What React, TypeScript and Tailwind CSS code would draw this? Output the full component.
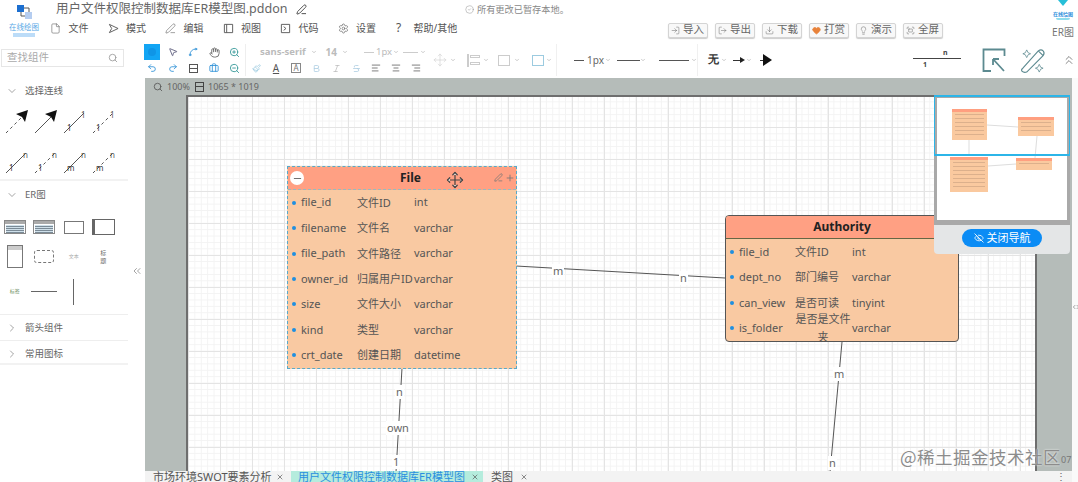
import React from "react";
import {
  AlignCenter,
  AlignLeft,
  AlignRight,
  Bold,
  Briefcase,
  ChevronDown,
  ChevronRight,
  ChevronsLeft,
  ChevronsLeftRight,
  ChevronsUp,
  CircleCheck,
  Download,
  EyeOff,
  File as FileIcon,
  Fullscreen,
  Hand,
  Heart,
  Italic,
  Lightbulb,
  LogIn,
  LogOut,
  Minus,
  Move,
  MousePointer2,
  Paintbrush,
  PenLine,
  Plus,
  Redo2,
  Search,
  Settings,
  Spline,
  Strikethrough,
  Undo2,
  X,
  ZoomIn,
  ZoomOut,
} from "lucide-react";

const MenuItem = ({ icon, label }: { icon: React.ReactNode; label: string }) => (
  <div className="w-[57.5px] shrink-0 flex items-center text-[10px] text-[#555] whitespace-nowrap">
    <span className="w-[18.5px] shrink-0 flex justify-start text-[#555]">{icon}</span>
    <span>{label}</span>
  </div>
);

const ActionButton = ({ icon, label }: { icon: React.ReactNode; label: string }) => (
  <button className="w-[40px] h-[15px] flex items-center justify-center gap-[3px] bg-[#f8f8f8] rounded-[2px] border border-[#d4d4d4] shadow-[0_1px_1px_#ccc] text-[10.5px] text-[#666]">
    {icon}
    {label}
  </button>
);

const Tool = ({ children, active }: { children: React.ReactNode; active?: boolean }) => (
  <div className="h-[16px] flex items-center justify-center">
    {active ? <span className="w-[16px] h-[16px] bg-[#12a5f4] flex items-center justify-center">{children}</span> : children}
  </div>
);

const Caret = ({ className = "" }: { className?: string }) => (
  <ChevronDown size={6} className={`shrink-0 text-[#999] ${className}`} />
);

const Connector = ({ dashed, start, end, arrow }: { dashed?: boolean; start?: string; end?: string; arrow?: boolean }) => (
  <svg width="26" height="26" viewBox="0 0 26 26" className="mx-auto">
    <line x1="2" y1="24" x2="22" y2="4" stroke="#555" strokeWidth="1" strokeDasharray={dashed ? "3 3" : undefined} />
    {arrow && <path d="M12 5 L24 1 L21 13 L18 8 Z" fill="#111" />}
    {start && <text x="5" y="22" fontSize="8" fill="#333">{start}</text>}
    {end && <text x="19" y="9" fontSize="8" fill="#555">{end}</text>}
  </svg>
);

const SectionTitle = ({ open, label }: { open?: boolean; label: string }) => (
  <div className="h-[26px] flex items-center pl-[6px] gap-[7px] text-[9.5px] text-[#666]">
    {open ? <ChevronDown size={12} strokeWidth={1.2} /> : <ChevronRight size={12} strokeWidth={1.2} />}
    <span>{label}</span>
  </div>
);

const MiniTable = () => (
  <div className="h-[14px] border border-[#888] bg-white">
    <div className="h-[3px] bg-[#aaa]" />
    <div className="h-[8px] m-[1px] bg-[repeating-linear-gradient(0deg,#7a8a96_0,#7a8a96_1px,#cfe0ea_1px,#cfe0ea_2px)]" />
  </div>
);

type Row = [string, string, string];

const ErTable = ({ title, rows, selected, className }: { title: string; rows: Row[]; selected?: boolean; className: string }) => (
  <div
    className={`absolute bg-[#f9c9a2] flex flex-col ${
      selected ? "border border-dashed border-[#58a9c9]" : "border border-[#555] rounded-[4px]"
    } ${className}`}
  >
    <div className={`h-[23px] shrink-0 bg-[#ffa083] relative flex items-center justify-center text-[12px] font-bold text-[#222] ${selected ? "pl-[17px] border-b border-dashed border-[#9bb]" : "rounded-t-[3px] border-b border-[#664]"}`}>
      {title}
      {selected && (
        <>
          <span className="absolute left-[2px] top-[4px] w-[14px] h-[14px] rounded-full bg-white flex items-center justify-center">
            <Minus size={11} strokeWidth={2} className="text-[#666]" />
          </span>
          <PenLine size={9} className="absolute right-[13px] top-[6px] text-[#777]" />
          <Plus size={10} className="absolute right-[1px] top-[6px] text-[#777]" />
        </>
      )}
    </div>
    {rows.map(([name, comment, type]) => (
      <div key={name} className="h-[25.5px] flex items-center pl-[4px] text-[11px] text-[#555]">
        <span className="w-[9px] shrink-0">
          <span className="block w-[4px] h-[4px] rounded-full bg-[#1f8fe0]" />
        </span>
        <span className="w-[56px] shrink-0 whitespace-nowrap">{name}</span>
        <span className="w-[57px] shrink-0 leading-[18px]">
          {comment.length > 5 && !comment.includes("ID") ? (
            <span className="block text-center w-[56px]">{comment}</span>
          ) : (
            <span className="whitespace-nowrap">{comment}</span>
          )}
        </span>
        <span>{type}</span>
      </div>
    ))}
  </div>
);

const Thumb = ({ className, lines }: { className: string; lines: number }) => (
  <div className={`absolute bg-[#fac99f] ${className}`}>
    <div className="h-[3px] bg-[#ff9f80]" />
    <div className="flex flex-col gap-[3px] pt-[2px] px-[3px]">
      {Array.from({ length: lines }).map((_, i) => (
        <div key={i} className="h-px bg-[#dcb08c]" />
      ))}
    </div>
  </div>
);

const fileRows: Row[] = [
  ["file_id", "文件ID", "int"],
  ["filename", "文件名", "varchar"],
  ["file_path", "文件路径", "varchar"],
  ["owner_id", "归属用户ID", "varchar"],
  ["size", "文件大小", "varchar"],
  ["kind", "类型", "varchar"],
  ["crt_date", "创建日期", "datetime"],
];

const authRows: Row[] = [
  ["file_id", "文件ID", "int"],
  ["dept_no", "部门编号", "varchar"],
  ["can_view", "是否可读", "tinyint"],
  ["is_folder", "是否是文件夹", "varchar"],
];

const App = () => {
  return (
    <div className="w-[1078px] h-[482px] overflow-hidden bg-white flex flex-col font-['Noto_Sans','Noto_Sans_CJK_SC',sans-serif] text-[#555]">
      {/* header */}
      <header className="h-[42px] shrink-0 flex relative">
        <div className="w-[48px] shrink-0 flex flex-col items-center pt-[4px]">
          <svg width="20" height="16" viewBox="0 0 20 16">
            <rect x="3" y="1" width="7" height="7" fill="#1c6fd0" />
            <rect x="11" y="8" width="7" height="7" fill="#b5cdf0" />
            <path d="M7 8 V12 H11 M10 4 H15 V8" stroke="#555" fill="none" strokeWidth="1" />
          </svg>
          <span className="text-[7.5px] leading-[9px] text-[#5aa9e6] mt-[3px] whitespace-nowrap">在线绘图</span>
          <span className="w-[22px] h-[4px] bg-[#bcdcf8] mt-[1px]" />
        </div>
        <div className="flex-1 flex flex-col">
          <div className="h-[18px] flex items-center pl-[8px] pt-[1px]">
            <span className="text-[12.5px] text-[#666] w-[240px] whitespace-nowrap">用户文件权限控制数据库ER模型图.pddon</span>
            <PenLine size={11} className="text-[#444]" />
            <span className="ml-[158px] flex items-center gap-[3px] text-[9.2px] text-[#888] whitespace-nowrap">
              <CircleCheck size={9} strokeWidth={1.2} />
              所有更改已暂存本地。
            </span>
          </div>
          <div className="h-[20px] flex items-center pl-[2px]">
            <MenuItem icon={<FileIcon size={11} strokeWidth={1.2} />} label="文件" />
            <MenuItem
              icon={
                <svg width="11" height="11" viewBox="0 0 12 12">
                  <path d="M1.5 1.5 L11 6 L1.5 10.5 L4 6 Z" fill="none" stroke="#555" />
                </svg>
              }
              label="模式"
            />
            <MenuItem icon={<PenLine size={11} strokeWidth={1.2} />} label="编辑" />
            <MenuItem
              icon={
                <svg width="11" height="11" viewBox="0 0 12 12">
                  <path d="M1.5 1.5 H10.5 V10.5 H1.5 Z M4 1.5 V10.5" fill="none" stroke="#555" />
                </svg>
              }
              label="视图"
            />
            <MenuItem
              icon={
                <svg width="11" height="11" viewBox="0 0 12 12">
                  <path d="M1.5 1.5 H10.5 V10.5 H1.5 Z M4 4 L6.5 6 L4 8" fill="none" stroke="#555" />
                </svg>
              }
              label="代码"
            />
            <MenuItem icon={<Settings size={11} strokeWidth={1.3} />} label="设置" />
            <MenuItem icon={<span className="text-[12px] leading-[12px] pl-[1px]">?</span>} label="帮助/其他" />
            <div className="ml-[215px] mt-[4px] flex gap-[7px]">
              <ActionButton icon={<LogIn size={9} strokeWidth={1.3} />} label="导入" />
              <ActionButton icon={<LogOut size={9} strokeWidth={1.3} />} label="导出" />
              <ActionButton icon={<Download size={9} strokeWidth={1.3} />} label="下载" />
              <ActionButton icon={<Heart size={9} fill="#e8823a" stroke="#e8823a" />} label="打赏" />
              <ActionButton icon={<Lightbulb size={9} strokeWidth={1.3} />} label="演示" />
              <ActionButton icon={<Fullscreen size={9} strokeWidth={1.3} />} label="全屏" />
            </div>
          </div>
        </div>
        <div className="absolute right-[4px] top-0 w-[22px] flex flex-col items-center">
          <svg width="12" height="8" viewBox="0 0 12 8">
            <path d="M1 0 L6 6 L11 0 Z" fill="#27bfd8" />
          </svg>
          <span className="text-[5px] leading-[7px] text-[#2f8fdc] font-bold whitespace-nowrap mt-[3px]">在线绘图</span>
          <span className="w-[14px] h-[2px] rounded-b-full bg-[#8fdcec]" />
          <span className="text-[10px] leading-[12px] mt-[6px] text-[#777]">ER图</span>
        </div>
      </header>

      {/* toolbar */}
      <div className="h-[36px] shrink-0 flex items-center">
        <div className="w-[142px] shrink-0 pl-[1px]">
          <div className="w-[123px] h-[18px] mt-[-4px] border border-[#e6e6e6] flex items-center justify-between pl-[5px] pr-[5px] text-[10.5px] text-[#aaa]">
            查找组件
            <Search size={10} className="text-[#999]" />
          </div>
        </div>
        <div className="w-[104px] shrink-0 grid grid-cols-5 border-r border-[#eee] h-[32px] text-[#2b8fd6]">
          <Tool active><span className="block w-[8px] h-[8px] rounded-full bg-[#0f95e6]" /></Tool>
          <Tool><MousePointer2 size={10} className="text-[#557]" /></Tool>
          <Tool><Spline size={10} /></Tool>
          <Tool><Hand size={11} className="text-[#666]" /></Tool>
          <Tool><ZoomIn size={11} className="text-[#3a9a9a]" /></Tool>
          <Tool><Undo2 size={10} /></Tool>
          <Tool><Redo2 size={10} /></Tool>
          <Tool><span className="w-[9px] h-[9px] border border-[#555] flex items-center"><span className="block w-full h-px bg-[#555]" /></span></Tool>
          <Tool><Briefcase size={10} /></Tool>
          <Tool><ZoomOut size={11} className="text-[#3a9a9a]" /></Tool>
        </div>
        <div className="w-[180px] shrink-0 flex flex-col h-[32px]">
          <div className="h-[16px] flex items-center text-[9.5px] text-[#bbb] whitespace-nowrap">
            <span className="ml-[14px] w-[66px] flex items-center font-bold">sans-serif<Caret className="ml-[5px]" /></span>
            <span className="w-[39px] flex items-center font-bold text-[10px]">14<Caret className="ml-[5px]" /></span>
            <span className="w-[10px] h-px bg-[#ccc] mr-[2px]" />
            <span>1px</span>
            <Caret className="ml-[1px]" />
            <span className="ml-[4px] w-[15px] h-px bg-[#ccc]" />
            <Caret className="ml-[2px]" />
          </div>
          <div className="h-[16px] grid grid-cols-9 items-center justify-items-center text-[10px] leading-none">
            <Paintbrush size={9} className="text-[#9ccbe0]" />
            <span className="underline text-[#555]">A</span>
            <span className="border border-[#888] text-[#777] w-[10px] h-[10px] flex items-center justify-center text-[8px]">A</span>
            <Bold size={9} className="text-[#a9cbe0]" />
            <Italic size={9} className="text-[#bbb]" />
            <Strikethrough size={9} className="text-[#a9cbe0]" />
            <AlignLeft size={10} className="text-[#666]" />
            <AlignCenter size={10} className="text-[#666]" />
            <AlignRight size={10} className="text-[#666]" />
          </div>
        </div>
        <div className="w-[131px] shrink-0 flex items-center h-[32px] border-r border-[#f0f0f0]">
          <Move size={14} className="ml-[7px] text-[#ccc]" strokeWidth={1} />
          <Caret className="ml-[3px]" />
          <span className="ml-[11px] w-[13px] h-[13px] border-l-2 border-[#ccc] flex flex-col justify-around pl-[1px]">
            <span className="block h-[3px] border border-[#ccc]" />
            <span className="block h-[3px] border border-[#ccc]" />
          </span>
          <Caret className="ml-[3px]" />
          <span className="ml-[9px] w-[12px] h-[11px] border border-[#ccc]" />
          <Caret className="ml-[4px]" />
          <span className="ml-[12px] w-[12px] h-[11px] border border-[#9ccbe0]" />
          <Caret className="ml-[2px]" />
        </div>
        <div className="w-[141px] shrink-0 flex items-center text-[10px] text-[#666] h-[32px] border-r border-[#f0f0f0] pl-[17px]">
          <span className="w-[10px] h-px bg-[#555] mr-[3px]" />
          <span>1px</span>
          <Caret className="ml-[1px]" />
          <span className="ml-[6px] w-[23px] h-px bg-[#555]" />
          <Caret />
          <span className="ml-[13px] w-[30px] h-px bg-[#555]" />
          <Caret className="ml-[2px]" />
        </div>
        <div className="w-[90px] shrink-0 flex items-center pl-[10px] text-[#333]">
          <span className="text-[11px] font-serif font-bold">无</span>
          <Caret className="ml-[2px]" />
          <span className="ml-[6px] flex items-center"><span className="w-[7px] h-px bg-[#333]" /><span className="border-y-[3px] border-y-transparent border-l-[5px] border-l-[#222]" /></span>
          <Caret className="ml-[1px]" />
          <span className="ml-[8px] flex items-center"><span className="w-[3px] h-px bg-[#333]" /><span className="border-y-[6px] border-y-transparent border-l-[9px] border-l-[#111]" /></span>
        </div>
        <div className="ml-[114px] w-[67px] h-[36px] shrink-0 relative">
          <span className="absolute left-[11px] top-[16px] w-[48px] h-px bg-[#444]" />
          <span className="absolute left-[41px] top-[6px] text-[7px] font-bold text-[#444]">n</span>
          <span className="absolute left-[21px] top-[18px] text-[7px] font-bold text-[#444]">1</span>
        </div>
        <svg width="24" height="25" viewBox="0 0 24 25" className="ml-[13px] shrink-0">
          <path d="M22.5 8 V1.5 H1.5 V23 H9 M11 11 L22 23 M11 11 H17 M11 11 V17" fill="none" stroke="#5c8a90" strokeWidth="1.8" />
        </svg>
        <svg width="27" height="27" viewBox="0 0 28 28" className="ml-[13px] shrink-0">
          <path d="M4 22 L20 4 Q23 2 25 4 Q27 6 25 9 L8 26 Q5 27 3 25 Q2 23 4 22 Z M20 4 L25 9" fill="none" stroke="#5c8a90" strokeWidth="1.2" />
          <path d="M8 3 L9.5 6 L12 7 L9.5 8 L8 11 L6.5 8 L4 7 L6.5 6 Z M21 18 L22.5 21 L25 22 L22.5 23 L21 26 L19.5 23 L17 22 L19.5 21 Z" fill="none" stroke="#5c8a90" strokeWidth="0.8" />
        </svg>
        <ChevronsUp size={14} strokeWidth={1.2} className="ml-[16px] shrink-0 text-[#555]" />
      </div>

      <div className="flex-1 flex min-h-0">
        {/* sidebar */}
        <aside className="w-[145px] shrink-0 flex relative">
          <div className="w-[128px] flex flex-col">
            <div className="border-b-2 border-[#f2f2f2] h-[103px]">
              <SectionTitle open label="选择连线" />
              <div className="w-[120px] grid grid-cols-4 gap-y-[14px] mt-[5px] px-[2px]">
                <Connector dashed arrow />
                <Connector arrow />
                <Connector start="1" end="1" />
                <Connector dashed start="1" end="1" />
                <Connector start="1" end="n" />
                <Connector dashed start="1" end="n" />
                <Connector start="m" end="n" />
                <Connector dashed start="m" end="n" />
              </div>
            </div>
            <div className="h-[134px] border-b border-[#eee] pt-[1px]">
              <SectionTitle open label="ER图" />
              <div className="w-[118px] grid grid-cols-4 items-center h-[96px] mt-[6px]">
                <div className="w-[22px] mx-auto"><MiniTable /></div>
                <div className="w-[22px] mx-auto"><MiniTable /></div>
                <div className="w-[20px] h-[13px] mx-auto border border-[#777]" />
                <div className="w-[23px] h-[16px] mx-auto border border-[#666] border-l-[3px]" />
                <div className="w-[16px] h-[23px] mx-auto border border-[#777]"><div className="h-[4px] bg-[#ccc]" /></div>
                <div className="w-[20px] h-[13px] mx-auto border border-dashed border-[#777] rounded-[3px]" />
                <div className="text-[5px] text-[#aaa] text-center">文本</div>
                <div className="text-[6px] leading-[8px] text-[#666] text-center">标<br />题</div>
                <div className="text-[5px] text-[#6a8a5a] text-center">标签</div>
                <div className="w-[26px] h-px mx-auto bg-[#666]" />
                <div className="w-px h-[26px] mx-auto bg-[#666]" />
                <div />
              </div>
            </div>
            <div className="h-[26px] border-b border-[#eee]"><SectionTitle label="箭头组件" /></div>
            <div className="h-[24px] border-b-2 border-[#f2f2f2]"><SectionTitle label="常用图标" /></div>
          </div>
          <div className="flex-1 bg-white flex items-start justify-center pt-[187px]">
            <ChevronsLeft size={12} strokeWidth={1.2} className="text-[#666]" />
          </div>
        </aside>

        <div className="flex-1 flex flex-col min-w-0">
          {/* canvas */}
          <main className="flex-1 min-h-0 bg-[#b5bcb9] relative flex flex-col">
            <div className="h-[17px] shrink-0 flex items-center pl-[8px] text-[9px] text-[#666]">
              <Search size={10} strokeWidth={2} className="text-[#555] mr-[4px]" />
              <span className="w-[28px]">100%</span>
              <span className="w-[9px] h-[10px] border border-[#444] mr-[4px] flex flex-col justify-center"><span className="block h-px bg-[#444]" /></span>
              1065 * 1019
            </div>
            <div className="flex-1 ml-[41px] mr-[35px] border-2 border-b-0 border-[#6e6e6e] relative overflow-hidden bg-white bg-[linear-gradient(#e4e4e4_1px,transparent_1px),linear-gradient(90deg,#e4e4e4_1px,transparent_1px),linear-gradient(#f3f3f3_1px,transparent_1px),linear-gradient(90deg,#f3f3f3_1px,transparent_1px)] bg-[size:32px_32px,32px_32px,6.4px_6.4px,6.4px_6.4px] bg-[position:0_-2px,0_-2px,0_-2px,0_-2px]">
              <svg className="absolute inset-0 w-full h-full">
                <line x1="328" y1="169" x2="537" y2="181" stroke="#555" strokeWidth="1" />
                <line x1="214" y1="271" x2="208" y2="375" stroke="#555" strokeWidth="1" />
                <line x1="654" y1="245" x2="642" y2="375" stroke="#555" strokeWidth="1" />
              </svg>
              {[
                ["m", "left-[364px] top-[167px]"],
                ["n", "left-[491px] top-[174px]"],
                ["n", "left-[207px] top-[288px]"],
                ["own", "left-[198px] top-[324px]"],
                ["1", "left-[204px] top-[358px]"],
                ["m", "left-[645px] top-[270px]"],
                ["n", "left-[640px] top-[359px]"],
              ].map(([text, pos]) => (
                <span key={pos} className={`absolute ${pos} bg-white px-[1px] text-[11px] leading-[14px] text-[#666]`}>
                  {text}
                </span>
              ))}
              <ErTable className="left-[99px] top-[69px] w-[230px] h-[203px]" title="File" rows={fileRows} selected />
              <ErTable className="left-[537px] top-[118px] w-[234px] h-[127px]" title="Authority" rows={authRows} />
              <Move size={18} strokeWidth={1.6} className="absolute left-[258px] top-[74px] text-[#444] fill-white" />
            </div>
            {/* minimap */}
            <div className="absolute right-[2px] top-[17px] w-[136px] h-[159px] bg-[#e4e6e7] rounded-b-[4px] z-10 flex flex-col items-center">
              <div className="w-full h-[130px] bg-white border-[3px] border-b-[5px] border-[#a9a9a9] relative overflow-hidden">
                <Thumb className="left-[15px] top-[11px] w-[35px] h-[31px]" lines={6} />
                <Thumb className="left-[81px] top-[19px] w-[36px] h-[19px]" lines={3} />
                <Thumb className="left-[13px] top-[59px] w-[38px] h-[35px]" lines={7} />
                <Thumb className="left-[79px] top-[60px] w-[36px] h-[12px]" lines={1} />
                <svg className="absolute inset-0 w-full h-full">
                  <line x1="50" y1="27" x2="81" y2="29" stroke="#ddd" />
                  <line x1="32" y1="42" x2="32" y2="56" stroke="#ddd" />
                  <line x1="100" y1="38" x2="98" y2="60" stroke="#ddd" />
                  <line x1="51" y1="68" x2="79" y2="66" stroke="#ddd" />
                </svg>
              </div>
              <div className="absolute left-0 top-0 w-full h-[61px] border border-t-2 border-b-2 border-[#2cb5e8]" />
              <button className="mt-[4px] w-[80px] h-[18px] rounded-full bg-[#0b8cf5] text-white text-[11px] flex items-center justify-center gap-[3px]">
                <EyeOff size={10} />
                关闭导航
              </button>
            </div>
            <span className="absolute left-[755px] top-[368px] z-20 text-[17.5px] leading-[22px] tracking-[0.5px] text-[#8c8c8c] whitespace-nowrap font-['Noto_Sans_CJK_SC',sans-serif] [text-shadow:0_0_2px_#fff]">
              @稀土掘金技术社区
            </span>
            <span className="absolute left-[916px] top-[376px] text-[9px] leading-[12px] text-[#777]">07</span>
          </main>
          {/* tabs */}
          <div className="h-[11px] shrink-0 bg-[#f3f3f3] flex items-start text-[11px] leading-[11px] overflow-hidden text-[#555]">
            <div className="w-[146px] shrink-0 pl-[8px] flex items-center gap-[4px] whitespace-nowrap">
              市场环境SWOT要素分析
              <X size={8} />
            </div>
            <div className="w-[192px] shrink-0 h-full bg-[#b5ecdd] pl-[7px] flex items-center gap-[6px] whitespace-nowrap text-[#2a8fe0]">
              用户文件权限控制数据库ER模型图
              <X size={8} className="text-[#555]" />
            </div>
            <div className="pl-[8px] flex items-center gap-[7px] whitespace-nowrap">
              类图
              <X size={8} />
            </div>
            <span className="ml-auto mr-[6px] text-[10px] leading-[10px] text-[#666]">⋮</span>
          </div>
        </div>

        {/* right strip */}
        <div className="w-[6px] shrink-0 bg-[#fafafa] overflow-visible pt-[225px]">
          <ChevronsLeftRight size={8} className="text-[#777]" />
        </div>
      </div>
    </div>
  );
};

export default App;
